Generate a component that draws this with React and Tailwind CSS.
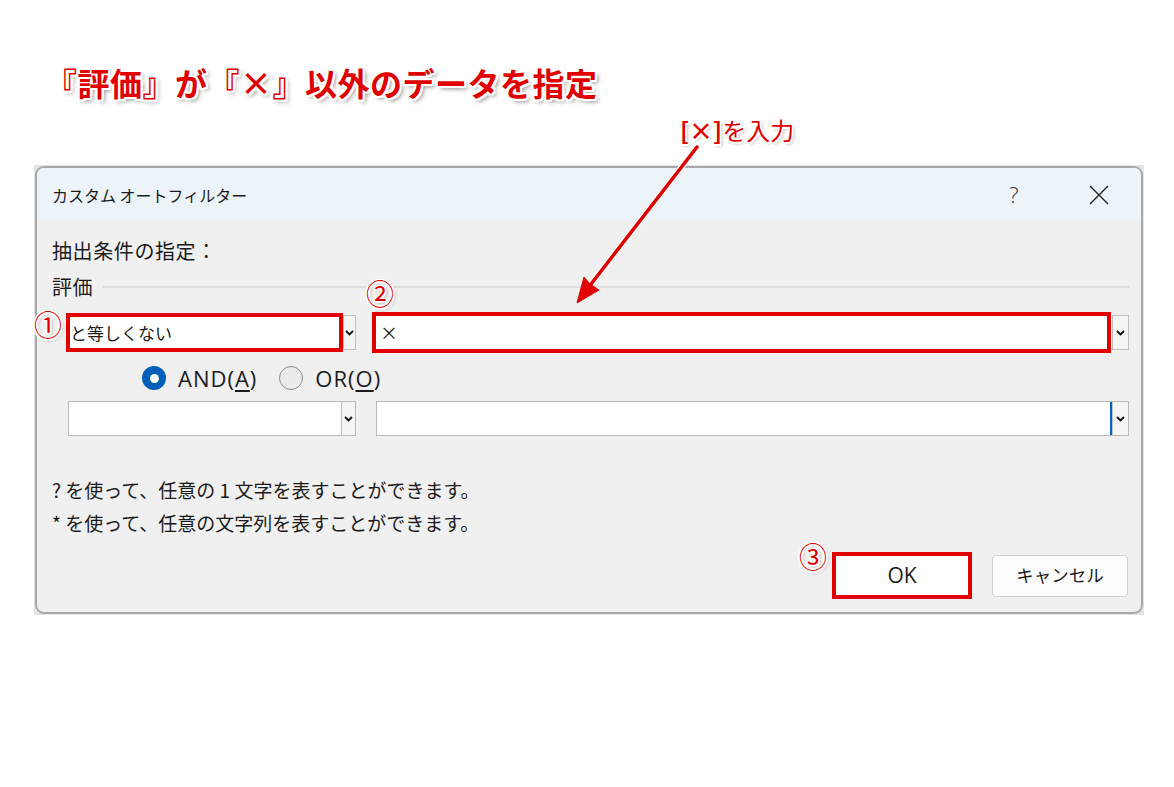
import React from "react";

const outline =
  "[text-shadow:2px_0_0_#fff,-2px_0_0_#fff,0_2px_0_#fff,0_-2px_0_#fff,2px_2px_0_#fff,-2px_-2px_0_#fff,2px_-2px_0_#fff,-2px_2px_0_#fff,3px_3px_4px_rgba(0,0,0,0.45)]";
const outlineSm =
  "[text-shadow:1.5px_0_0_#fff,-1.5px_0_0_#fff,0_1.5px_0_#fff,0_-1.5px_0_#fff,1.5px_1.5px_0_#fff,-1.5px_-1.5px_0_#fff,1.5px_-1.5px_0_#fff,-1.5px_1.5px_0_#fff,2px_2px_3px_rgba(0,0,0,0.4)]";

function Chevron() {
  return (
    <svg width="9" height="6" viewBox="0 0 9 6" fill="none">
      <path d="M1 1 L4.5 4.5 L8 1" stroke="#111" strokeWidth="1.8" />
    </svg>
  );
}

function Drop({ w }) {
  return (
    <div
      className={`${w} h-[35px] border border-[#bdbdbd] bg-[#f5f5f5] flex items-center justify-center`}
    >
      <Chevron />
    </div>
  );
}

export default function App() {
  return (
    <div className="relative w-[1174px] h-[787px] bg-white overflow-hidden font-['Noto_Sans_CJK_JP',sans-serif] text-[#1b1b1b]">
      {/* Headline */}
      <div className="pt-[63px] pl-[45px]">
        <div
          className={`h-[38px] leading-[38px] text-[32px] font-bold text-[#e00000] tracking-[0.5px] ${outline}`}
        >
          『評価』が『×』以外のデータを指定
        </div>
      </div>

      {/* Callout label */}
      <div className="mt-[14px] h-[30px] pl-[680px]">
        <span className={`text-[24px] leading-[30px] text-[#e00000] ${outlineSm}`}>
          <span className="font-bold">[×]</span>を入力
        </span>
      </div>

      {/* Backdrop + dialog */}
      <div className="mt-[20px] ml-[34px] w-[1110px] h-[450px] bg-[#e4e4e4] p-[1px]">
        <div className="w-[1108px] h-[448px] border-2 border-[#a8a8a8] rounded-[9px] overflow-hidden flex flex-col bg-[#f0f0f0]">
          {/* Title bar */}
          <div className="h-[53px] bg-[#edf4f9] flex items-center pl-[15px] pr-[32px]">
            <span className="text-[16px]">カスタム オートフィルター</span>
            <span className="ml-auto w-[20px] text-center text-[22px] font-light font-['Open_Sans',sans-serif] text-[#333]">
              ?
            </span>
            <span className="ml-[65px] w-[20px] h-[20px] flex items-center justify-center">
              <svg width="20" height="20" viewBox="0 0 20 20">
                <path d="M1 1 L19 19 M19 1 L1 19" stroke="#222" strokeWidth="1.4" />
              </svg>
            </span>
          </div>

          {/* Body */}
          <div className="flex-1 flex flex-col">
            <div className="mt-[18px] ml-[15px] text-[20px] leading-[24px] tracking-[0.6px]">
              抽出条件の指定：
            </div>
            <div className="mt-[12px] ml-[15px] mr-[12px] h-[24px] flex items-center">
              <span className="text-[20px] leading-[24px] tracking-[0.6px]">評価</span>
              <div className="ml-[10px] flex-1 h-[2px] bg-[#dcdcdc]" />
            </div>

            {/* Row 1 */}
            <div className="mt-[13px] ml-[29px] h-[41px] flex items-center">
              <div className="w-[277px] h-[39px] border-4 border-[#e00000] bg-white flex items-center text-[17px]">
                と等しくない
              </div>
              <Drop w="w-[13px]" />
              <div className="ml-[16px] w-[739px] h-[41px] border-4 border-[#e00000] bg-white flex items-center pl-[4px] text-[18px]">
                ×
              </div>
              <div className="ml-[1px]">
                <Drop w="w-[17px]" />
              </div>
            </div>

            {/* Radios */}
            <div className="mt-[12px] ml-[105px] h-[26px] flex items-center font-['Open_Sans',sans-serif] text-[22px] tracking-[1px]">
              <span className="w-[24px] h-[24px] rounded-full bg-[#005fb8] flex items-center justify-center">
                <span className="w-[9px] h-[9px] rounded-full bg-white" />
              </span>
              <span className="ml-[12px] leading-[26px]">
                AND(<span className="underline underline-offset-[3px]">A</span>)
              </span>
              <span className="ml-[22px] w-[24px] h-[24px] rounded-full border border-[#8a8a8a] bg-[#ececec]" />
              <span className="ml-[12px] leading-[26px]">
                OR(<span className="underline underline-offset-[3px]">O</span>)
              </span>
            </div>

            {/* Row 2 */}
            <div className="mt-[10px] ml-[31px] h-[35px] flex">
              <div className="w-[288px] h-[35px] border border-[#b8b8b8] bg-white flex">
                <div className="flex-1" />
                <div className="w-[14px] border-l border-[#c4c4c4] bg-[#f5f5f5] flex items-center justify-center">
                  <Chevron />
                </div>
              </div>
              <div className="ml-[20px] w-[753px] h-[35px] border border-[#b8b8b8] bg-white flex">
                <div className="flex-1" />
                <div className="w-[2px] bg-[#0067c0]" />
                <div className="w-[16px] border-l border-[#c4c4c4] bg-[#f5f5f5] flex items-center justify-center">
                  <Chevron />
                </div>
              </div>
            </div>

            {/* Help text */}
            <div className="mt-[37px] ml-[15px] text-[19px] leading-[33px]">
              <div>? を使って、任意の 1 文字を表すことができます。</div>
              <div>* を使って、任意の文字列を表すことができます。</div>
            </div>

            {/* Buttons */}
            <div className="mt-[13px] mr-[13px] flex items-center justify-end">
              <div className="w-[140px] h-[47px] border-4 border-[#e00000] bg-white flex items-center justify-center font-['Open_Sans',sans-serif] text-[21px]">
                OK
              </div>
              <div className="ml-[20px] w-[136px] h-[42px] rounded-[4px] border border-[#d0d0d0] bg-[#fdfdfd] flex items-center justify-center text-[17.5px]">
                キャンセル
              </div>
            </div>
          </div>
        </div>
      </div>

      {/* Circled step numbers */}
      <span
        className={`absolute left-[48px] top-[324px] -translate-x-1/2 -translate-y-1/2 text-[28px] leading-none text-[#e00000] ${outlineSm}`}
      >
        ①
      </span>
      <span
        className={`absolute left-[380px] top-[293px] -translate-x-1/2 -translate-y-1/2 text-[28px] leading-none text-[#e00000] ${outlineSm}`}
      >
        ②
      </span>
      <span
        className={`absolute left-[813px] top-[556px] -translate-x-1/2 -translate-y-1/2 text-[28px] leading-none text-[#e00000] ${outlineSm}`}
      >
        ③
      </span>

      {/* Arrow */}
      <svg
        className="absolute left-0 top-0 pointer-events-none"
        width="1174"
        height="787"
        viewBox="0 0 1174 787"
      >
        <line x1="697" y1="147" x2="588" y2="288" stroke="#fff" strokeWidth="6" strokeLinecap="round" />
        <line x1="697" y1="147" x2="588" y2="288" stroke="#e00000" strokeWidth="3.5" strokeLinecap="round" />
        <polygon points="577,303 599,290 590,284 584,277" fill="#e00000" stroke="#e00000" strokeWidth="1" strokeLinejoin="round" />
      </svg>
    </div>
  );
}
